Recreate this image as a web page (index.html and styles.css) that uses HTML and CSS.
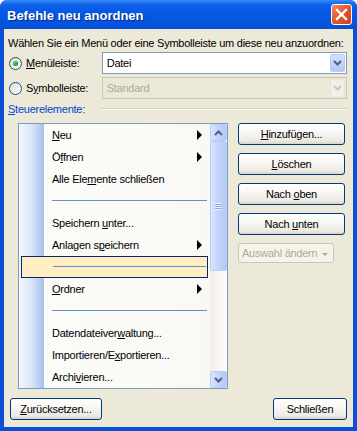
FILE: index.html
```html
<!DOCTYPE html>
<html lang="de">
<head>
    <meta charset="UTF-8">
    <title>Befehle neu anordnen</title>
    <link rel="stylesheet" href="styles.css">
</head>
<body>
    <div class="window">
        <div class="titlebar">
            <span class="title">Befehle neu anordnen</span>
            <span class="close">
                <svg width="13" height="13" viewBox="0 0 13 13"><path d="M2 2 L11 11 M11 2 L2 11" stroke="#fff" stroke-width="2.4" stroke-linecap="square"/></svg>
            </span>
        </div>
        <div class="client">
            <div class="intro">Wählen Sie ein Menü oder eine Symbolleiste um diese neu anzuordnen:</div>

            <div class="choice">
                <label class="choice-label"><span class="radio checked"></span><u>M</u>enüleiste:</label>
                <div class="combo">
                    <span class="combo-text">Datei</span>
                    <span class="combo-btn"><svg width="9" height="6" viewBox="0 0 9 6"><path d="M1 1 L4.5 4.5 L8 1" fill="none" stroke="#4d6185" stroke-width="2"/></svg></span>
                </div>
            </div>
            <div class="choice choice-second">
                <label class="choice-label"><span class="radio"></span>S<u>y</u>mbolleiste:</label>
                <div class="combo disabled">
                    <span class="combo-text">Standard</span>
                    <span class="combo-btn"><svg width="9" height="6" viewBox="0 0 9 6"><path d="M1 1 L4.5 4.5 L8 1" fill="none" stroke="#c9c7ba" stroke-width="2"/></svg></span>
                </div>
            </div>

            <div class="group-label">
                <span class="group-text"><u>S</u>teuerelemente:</span>
                <span class="etch"></span>
            </div>

            <div class="main">
                <div class="listbox">
                    <div class="menu">
                        <div class="item"><span><u>N</u>eu</span><i class="arrow"></i></div>
                        <div class="item"><span>Ö<u>f</u>fnen</span><i class="arrow"></i></div>
                        <div class="item"><span>Alle Ele<u>m</u>ente schließen</span></div>
                        <div class="item sep"><i class="line"></i></div>
                        <div class="item"><span>Speichern <u>u</u>nter...</span></div>
                        <div class="item"><span>Anlagen s<u>p</u>eichern</span><i class="arrow"></i></div>
                        <div class="item sep selected"><i class="line"></i></div>
                        <div class="item"><span><u>O</u>rdner</span><i class="arrow"></i></div>
                        <div class="item sep"><i class="line"></i></div>
                        <div class="item"><span>Datendateiver<u>w</u>altung...</span></div>
                        <div class="item"><span>Importieren/E<u>x</u>portieren...</span></div>
                        <div class="item"><span>Archi<u>v</u>ieren...</span></div>
                    </div>
                    <div class="scrollbar">
                        <div class="sb-btn"><svg width="9" height="6" viewBox="0 0 9 6"><path d="M1 5 L4.5 1.5 L8 5" fill="none" stroke="#4d6185" stroke-width="2"/></svg></div>
                        <div class="sb-thumb"><span class="grip"></span></div>
                        <div class="sb-track"></div>
                        <div class="sb-btn"><svg width="9" height="6" viewBox="0 0 9 6"><path d="M1 1 L4.5 4.5 L8 1" fill="none" stroke="#4d6185" stroke-width="2"/></svg></div>
                    </div>
                </div>
                <div class="side-buttons">
                    <button class="btn"><u>H</u>inzufügen...</button>
                    <button class="btn"><u>L</u>öschen</button>
                    <button class="btn">Nach <u>o</u>ben</button>
                    <button class="btn">Nach <u>u</u>nten</button>
                    <button class="btn btn-disabled btn-small">Auswahl ändern <i class="caret"></i></button>
                </div>
            </div>

            <div class="footer">
                <button class="btn btn-reset"><u>Z</u>urücksetzen...</button>
                <button class="btn btn-close">Schließen</button>
            </div>
        </div>
    </div>
</body>
</html>
```

FILE: styles.css
```css
body {
    margin: 0;
    background: #fff;
    font-family: "Liberation Sans", Arial, sans-serif;
    font-size: 11px;
    letter-spacing: -0.25px;
    color: #000;
}
.window {
    width: 357px;
    height: 431px;
    display: flex;
    flex-direction: column;
    background: #0a4fd6;
    border-radius: 7px 7px 0 0;
    overflow: hidden;
}
.titlebar {
    height: 29px;
    flex: none;
    display: flex;
    align-items: center;
    justify-content: space-between;
    padding: 0 5px 0 7px;
    background: linear-gradient(to bottom, #3d8ef8 0, #2477f2 2px, #0b5fe9 5px, #0658e5 45%, #0555e0 75%, #0750d6 100%);
}
.title {
    color: #fff;
    font-weight: bold;
    font-size: 13px;
    letter-spacing: 0;
    text-shadow: 1px 1px 1px #0a2a8a;
    margin-top: 1px;
}
.close {
    width: 19px;
    height: 19px;
    display: flex;
    align-items: center;
    justify-content: center;
    border: 1px solid #fff;
    border-radius: 3px;
    background: linear-gradient(to bottom right, #f08a67, #e2552b 50%, #c9431c);
}
.client {
    flex: 1;
    min-height: 0;
    margin: 0 4px 4px;
    background: #ece9d8;
    padding: 8px 6px 7px 4px;
    display: flex;
    flex-direction: column;
}
.intro {
    line-height: 13px;
    white-space: nowrap;
}
.choice {
    display: flex;
    align-items: center;
    margin-top: 2px;
}
.choice-second {
    margin-top: 3px;
}
.choice-label {
    width: 94px;
    display: flex;
    align-items: center;
}
.radio {
    width: 11px;
    height: 11px;
    margin: 0 4px 0 1px;
    border: 1px solid #1c5180;
    border-radius: 50%;
    background: linear-gradient(to bottom right, #dcdbd5, #fff);
    display: flex;
    align-items: center;
    justify-content: center;
}
.radio.checked::after {
    content: "";
    width: 5px;
    height: 5px;
    border-radius: 50%;
    background: radial-gradient(circle at 35% 35%, #5ed25e, #21a121 60%, #1a8a1a);
}
.combo {
    width: 244px;
    height: 20px;
    border: 1px solid #7f9db9;
    background: #fff;
    display: flex;
    align-items: center;
    justify-content: space-between;
}
.combo-text {
    padding-left: 4px;
}
.combo-btn {
    width: 15px;
    height: 18px;
    margin-right: 1px;
    border: 1px solid #b9ccf5;
    box-sizing: border-box;
    border-radius: 2px;
    background: linear-gradient(to bottom, #d2defd, #b4c8f7);
    display: flex;
    align-items: center;
    justify-content: center;
}
.combo.disabled {
    border-color: #c9c7ba;
    background: #ebe8d8;
}
.combo.disabled .combo-text {
    color: #aca899;
}
.combo.disabled .combo-btn {
    border-color: #e8e6da;
    background: #f1efe6;
}
.group-label {
    display: flex;
    align-items: center;
    margin-top: 3px;
    height: 13px;
}
.group-text {
    color: #0046d5;
}
.etch {
    margin-left: auto;
    width: 247px;
    height: 1px;
    background: #d0d0bf;
    border-bottom: 1px solid #fff;
}
.main {
    display: flex;
    align-items: flex-start;
    margin-top: 8px;
}
.listbox {
    margin-left: 10px;
    width: 208px;
    height: 264px;
    border: 1px solid #7f9db9;
    display: flex;
}
.menu {
    flex: 1;
    background: linear-gradient(to right, #f3f7fe 0, #dce7f9 12px, #a6c0ec 25px, #fbfbf8 25px, #f9f8f5 100%);
}
.item {
    height: 22px;
    display: flex;
    align-items: center;
    padding-left: 33px;
    padding-right: 8px;
    box-sizing: border-box;
}
.arrow {
    margin-left: auto;
    width: 0;
    height: 0;
    border-left: 5px solid #000;
    border-top: 5px solid transparent;
    border-bottom: 5px solid transparent;
}
.sep {
    padding-right: 3px;
}
.line {
    flex: 1;
    height: 1px;
    background: #6a8ccb;
    margin-top: -2px;
}
.selected {
    margin: 0 2px;
    padding-left: 31px;
    padding-right: 1px;
    border: 1px solid #0a246a;
    background: #ffeec2;
}
.scrollbar {
    width: 17px;
    display: flex;
    flex-direction: column;
    background: linear-gradient(to right, #f1efe7, #fefefb);
}
.sb-btn,
.sb-thumb {
    border: 1px solid #b9ccf5;
    border-radius: 2px;
    box-sizing: border-box;
    background: linear-gradient(to right, #dbe5fd, #c1d3fb 50%, #b4c9f6);
    display: flex;
    align-items: center;
    justify-content: center;
}
.sb-btn {
    height: 17px;
    flex: none;
}
.sb-thumb {
    height: 130px;
    flex: none;
}
.grip {
    width: 7px;
    height: 7px;
    background: repeating-linear-gradient(to bottom, #eef4fe 0, #eef4fe 1px, #8caae6 1px, #8caae6 2px);
}
.sb-track {
    flex: 1;
}
.side-buttons {
    margin-left: 10px;
    display: flex;
    flex-direction: column;
    gap: 8px;
}
.btn {
    font-family: inherit;
    font-size: 11px;
    letter-spacing: -0.25px;
    color: #000;
    width: 107px;
    height: 22px;
    padding: 0;
    border: 1px solid #003c74;
    border-radius: 3px;
    background: linear-gradient(to bottom, #fff 0, #f7f7f4 40%, #eceae3 85%, #d8d3c8 100%);
}
.btn-disabled {
    color: #aca899;
    border-color: #c9c7ba;
    background: #f5f4ea;
}
.btn-small {
    width: 96px;
    height: 20px;
    text-align: left;
    padding-left: 3px;
}
.caret {
    display: inline-block;
    vertical-align: middle;
    margin-left: 2px;
    border-top: 3px solid #aca899;
    border-left: 3px solid transparent;
    border-right: 3px solid transparent;
}
.footer {
    margin-top: auto;
    display: flex;
    justify-content: space-between;
    padding-left: 2px;
}
.btn-reset {
    width: 92px;
}
.btn-close {
    width: 74px;
}
```
